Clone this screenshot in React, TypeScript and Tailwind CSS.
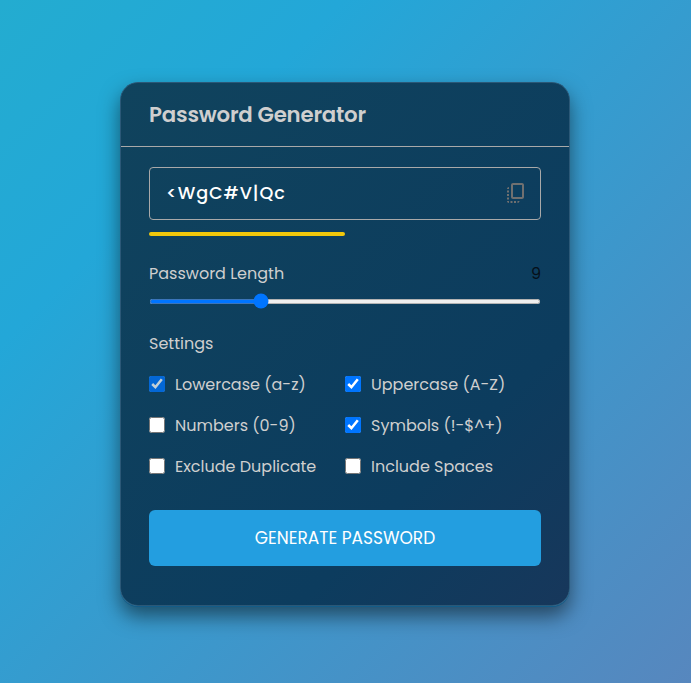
import { useState } from "react";
import { MdOutlineCopyAll } from "react-icons/md";

type Option = { label: string; checked: boolean; locked?: boolean };

const OPTIONS: Option[] = [
  { label: "Lowercase (a-z)", checked: true, locked: true },
  { label: "Uppercase (A-Z)", checked: true },
  { label: "Numbers (0-9)", checked: false },
  { label: "Symbols (!-$^+)", checked: true },
  { label: "Exclude Duplicate", checked: false },
  { label: "Include Spaces", checked: false },
];

export default function App() {
  const [length, setLength] = useState(9);

  return (
    <main className="flex h-[683px] items-start justify-center bg-[linear-gradient(135deg,#23acd0_0%,#23a7d8_25%,#5787be_100%)] pr-px pt-[82px] font-['Poppins','Inter',sans-serif] text-[#cfcfcf]">
      <section className="h-[524px] w-[450px] rounded-[18px] border border-[#2b5877] bg-[linear-gradient(135deg,#10435d_0%,#0c3c5e_72%,#17375b_100%)] shadow-[0_1px_0_#135c88,0_10px_20px_rgba(0,0,0,0.5)]">
        <header className="flex h-16 items-center border-b border-[#a9a9a9] px-7">
          <h2 className="text-[21.3px] font-semibold leading-8 tracking-[-0.2px]">Password Generator</h2>
        </header>
        <div className="px-7 pt-5">
          <div className="flex h-[53px] items-center justify-between rounded border border-[#a9a9a9] pb-px pl-4 pr-3">
            <span className="text-[17.6px] font-medium tracking-[0.9px] text-white">&lt;WgC#V|Qc</span>
            <MdOutlineCopyAll className="size-6 text-[#707070]" />
          </div>
          <div className="mt-3 h-1 w-1/2 rounded-full bg-[#f1c80b]" />
          <div className="mt-[26px] flex h-6 items-center justify-between">
            <label htmlFor="length" className="text-base">Password Length</label>
            <span className="text-base text-[#061019]">{length}</span>
          </div>
          <input
            id="length"
            type="range"
            min={1}
            max={30}
            value={length}
            onChange={(e) => setLength(Number(e.target.value))}
            className="mt-[12.5px] block h-[5px] w-full"
          />
          <p className="mt-[28.5px] h-6 text-base leading-6">Settings</p>
          <div className="mt-[17px] grid grid-cols-2 gap-y-[17px]">
            {OPTIONS.map((o) => (
              <label key={o.label} className="flex h-6 items-center gap-2.5">
                <input
                  type="checkbox"
                  defaultChecked={o.checked}
                  className={o.locked ? "pointer-events-none mb-0.5 size-4 opacity-75" : "mb-0.5 size-4"}
                />
                <span className="whitespace-nowrap text-base leading-6">{o.label}</span>
              </label>
            ))}
          </div>
          <button className="mt-[31px] h-14 w-full rounded-md bg-[#239ee0] pt-px text-[17px] text-white">
            GENERATE PASSWORD
          </button>
        </div>
      </section>
    </main>
  );
}
